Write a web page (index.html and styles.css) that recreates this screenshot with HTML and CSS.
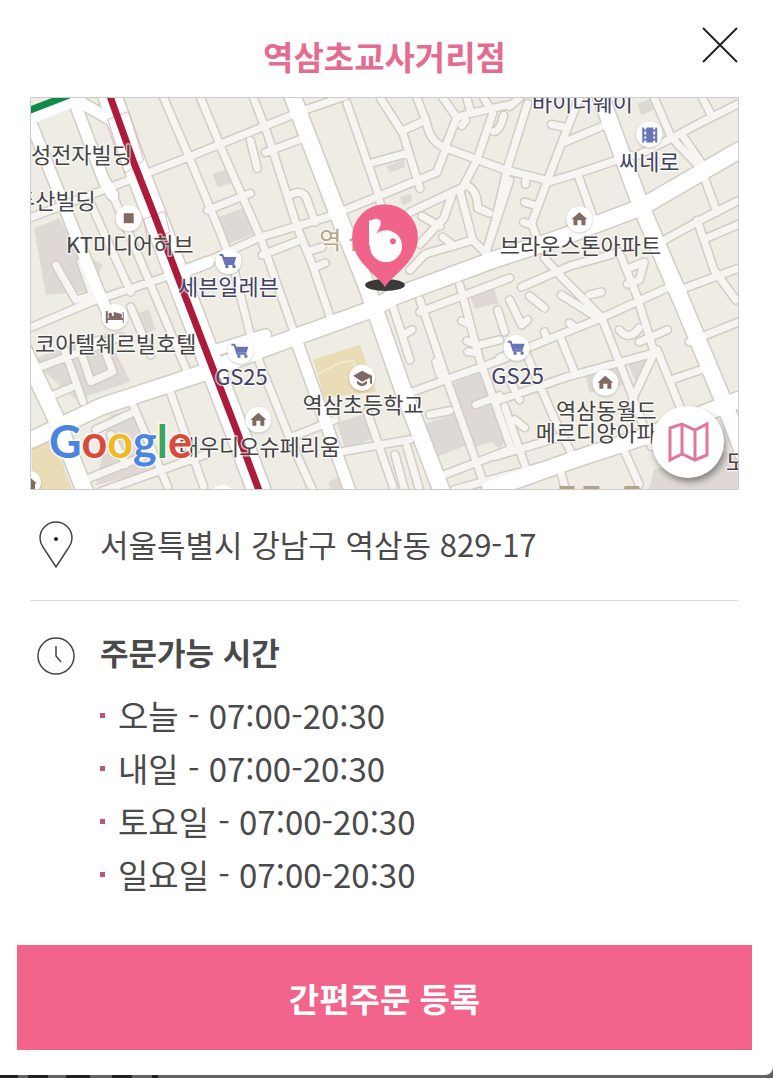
FILE: index.html
```html
<!DOCTYPE html>
<html lang="ko">
<head>
<meta charset="utf-8">
<meta name="viewport" content="width=device-width, initial-scale=1">
<title>역삼초교사거리점</title>
<link rel="stylesheet" href="styles.css">
</head>
<body>
<main class="sheet">
  <header class="sheet-header">
    <h1 class="store-name">역삼초교사거리점</h1>
    <button class="close" type="button" aria-label="닫기">
      <svg viewBox="0 0 38 38" width="38" height="38"><path d="M2 2 36 36M36 2 2 36"/></svg>
    </button>
  </header>

  <section class="map" aria-label="지도">
    <svg class="map-canvas" viewBox="30 97 709 393" preserveAspectRatio="xMidYMid slice">
      <defs>
        <path id="minor" d="M31 217 133 178 187 157 303 110 347 95M187 270 260 237 327 217 393 190 437 172 446 148M163 97 187 153 220 233 233 267 253 347 290 440 313 492M200 97 223 153 260 237 293 330M253 97 267 133 297 227 313 267 330 317M207 210 250 193M250 140 257 168M265 152 300 139M288 196Q303 187 307 200L315 222M262 255 300 240M312 250 322 247M315 267 325 263
          M87 197 130 292M110 190 153 292 190 380M130 307 150 355M31 327 90 302 180 272M40 367 120 337M60 340 82 402M82 345 100 340 112 372 90 382 78 347M48 397 70 388M133 407 167 487M170 393 203 487M95 430 130 414M85 480 140 458M100 492 205 455M110 435 125 465M55 265 75 300 92 295 80 262
          M347 103 377 190 383 215M380 97 403 133 420 188M403 130 423 121M417 97 427 123Q430 142 447 148L507 170 548 180M370 163 407 153M443 97 457 117 446 145M457 117 470 113 510 104M467 97 471 112M484 97 490 108M493 113 477 160 463 187 410 212M510 180 487 250 490 262M467 185Q478 190 478 208L490 213M460 190 473 240 487 254M473 240 425 254 410 270M452 195 444 218 420 244M422 216 440 226M443 237 454 246M462 125 466 120M494 131Q500 131 504 115
          M528 103 508 167 495 223 487 250M580 97 562 143 548 180 532 223 538 240M562 143 612 122M552 124 566 127M548 182 578 173 632 155M578 173 594 218M526 180 526 184M525 202 535 205M524 222 533 225M520 97 510 106M655 97 672 137 700 166M638 155 672 138 700 123 740 103M702 95 712 114M682 133 704 165
          M705 177 718 212M665 240 705 218 740 200M698 220 715 270 737 300M705 239 740 224M675 292 740 268M622 257 638 297 655 353M545 258 565 280 602 317 628 383 652 447M522 287 570 266 620 252M562 295 602 320M630 268 645 262 640 280 628 284
          M500 358 528 348 602 318 668 288 680 285M495 402 568 377 655 353M690 342 740 322M525 350 552 413 575 460M562 340 575 372M505 407 530 479M495 457 562 437M655 353 633 400M658 350 682 410M672 380 702 370M668 330 640 342M620 330Q630 342 640 328M570 323 575 327M545 332 548 340M590 295 602 292M510 300 522 325 528 320M530 296 545 308M515 420 525 428M560 468 566 490M620 440 640 485
          M420 300 447 380 482 478M460 285 480 360 512 450M410 393 507 358M420 312 510 278M393 307 402 335 410 360M403 335 412 330M436 362 440 375M440 477 510 450M430 415 450 411M476 405 500 396M498 310 505 332M462 321 470 324M467 341 476 344M468 352 478 353M500 340 480 345
          M293 437 335 420M367 412 393 487M337 453 410 440M407 447 420 492M395 455 405 492M510 380 520 400M455 490 560 462"/>
        <path id="local" d="M31 125 70 223 100 297 110 320M73 100 103 180 112 195M73 98 120 125M297 343 350 492M187 270 208 262M210 352 265 335"/>
        <path id="arterial" d="M292 95 335 207 367 287 403 390 442 492M31 440 100 407 197 375 260 350 370 310 393 297 493 260 560 238 642 207 740 150M600 92 642 207 682 300 725 403 745 455M490 490 575 460 645 437 740 400M20 345 57 423 84 492"/>
        <path id="boulevard" d="M109 95 133 162 153 213 183 292 237 433 259 492"/>
        <g id="cart"><path d="M-9-6H-6L-3 3H6" class="ink-line"/><path d="M-5-4H8L6 2H-3Z"/><path d="M-3 4H0V7H-3ZM4 4H7V7H4Z"/></g>
        <path id="home" d="M-8 0 0-7 8 0H6V6H2V1H-2V6H-6V0Z"/>
      </defs>
      <rect class="land" x="30" y="97" width="709" height="393"/>
      <path class="school-yard" d="M313 360 360 345 376 392 324 398ZM31 447 53 440 71 490H31Z"/>
      <path class="building" d="M212 174 226 169 231 183 217 187ZM214 218 245 207 253 234 222 246ZM33 228 58 218 102 290 45 295ZM85 255 102 265 98 274 88 270ZM386 166 404 159 405 167 390 172ZM400 197 411 193 412 201 403 205ZM638 103 652 98 655 109 642 115ZM337 423 368 413 375 438 345 450ZM453 384 480 373 506 438 474 448ZM422 425 458 413 466 446 438 457ZM628 363 654 356 640 390ZM30 360 105 333 130 382 75 400ZM130 317 148 309 155 329 138 336ZM110 415 135 408 155 470 95 486ZM470 295 494 287 499 303 475 309ZM497 415 510 435 500 449 488 440ZM655 470 740 450V490H650ZM328 482 342 477 347 490H330ZM585 372 620 365 625 385 590 393Z"/>
      <path class="plot" d="M318 374 340 363 353 361 360 378"/>
      <use class="road-edge minor-edge" href="#minor"/>
      <use class="road-edge local-edge" href="#local"/>
      <use class="road-edge arterial-edge" href="#arterial"/>
      <use class="road-edge boulevard-edge" href="#boulevard"/>
      <use class="road minor-fill" href="#minor"/>
      <use class="road local-fill" href="#local"/>
      <use class="road arterial-fill" href="#arterial"/>
      <use class="road boulevard-fill" href="#boulevard"/>
      <path class="green-band" d="M28 116 83 94"/>
      <path class="green-line" d="M28 110 72 93"/>
      <path class="crossing" d="M107 119 128 111 143 160 124 173ZM143 219 164 211 169 232 147 240Z"/>
      <use class="subway" href="#boulevard"/>

      <g class="poi-discs">
        <circle cx="128" cy="218" r="13"/><circle cx="228" cy="261" r="13"/><circle cx="114" cy="317" r="13"/>
        <circle cx="240" cy="351" r="13"/><circle cx="258" cy="420" r="13"/><circle cx="362" cy="378" r="13"/>
        <circle cx="517" cy="348" r="13"/><circle cx="606" cy="383" r="13"/><circle cx="580" cy="219" r="13"/>
        <circle cx="650" cy="134" r="13"/><circle cx="28" cy="483" r="12"/><circle cx="222" cy="497" r="12"/>
      </g>
      <g class="poi-shop">
        <use href="#cart" x="228" y="261"/><use href="#cart" x="240" y="351"/><use href="#cart" x="517" y="348"/>
        <path fill-rule="evenodd" d="M643 127H645V129H647V127H654V129H656V127H658V142H656V140H654V142H647V140H645V142H643ZM645 131V134H647V131ZM645 136V138H647V136ZM654 131V134H656V131ZM654 136V138H656V136Z"/>
      </g>
      <g class="poi-place">
        <path d="M123 213H133V223H123Z"/>
        <use href="#home" x="258" y="420"/><use href="#home" x="606" y="383"/><use href="#home" x="580" y="219"/><use href="#home" x="28" y="484"/>
        <path d="M105 311H107V318H121V314L113 312V316H111A2 2 0 1 0 108 316V318H122V312H123V323H122V320H107V323H105Z"/>
        <path d="M353 376 362 371 372 376V384H370V378L362 382ZM357 381 362 384 367 381V384Q362 389 357 384Z"/>
      </g>

      <g class="map-text">
        <text x="30" y="163">성전자빌딩</text>
        <text x="95" y="209" text-anchor="end">두산빌딩</text>
        <text x="65" y="253">KT미디어허브</text>
        <text x="34" y="352">코아텔쉐르빌호텔</text>
        <text x="340" y="455" text-anchor="end">대우디오슈페리움</text>
        <text x="363" y="413" text-anchor="middle">역삼초등학교</text>
        <text x="607" y="419" text-anchor="middle">역삼동월드</text>
        <text x="607" y="441" text-anchor="middle">메르디앙아파트</text>
        <text x="581" y="254" text-anchor="middle">브라운스톤아파트</text>
        <text x="727" y="471">모</text>
        <g class="shop-text">
          <text x="228" y="295" text-anchor="middle">세븐일레븐</text>
          <text x="241" y="385" text-anchor="middle">GS25</text>
          <text x="518" y="384" text-anchor="middle">GS25</text>
          <text x="650" y="170" text-anchor="middle">씨네로</text>
          <text x="583" y="110" text-anchor="middle">바이더웨이</text>
        </g>
        <text class="district" x="319" y="249">역 삼</text>
      </g>
      <path class="district-edge" d="M560 488H575M584 488H600M625 488H640"/>

      <ellipse class="pin-shadow" cx="385" cy="285" rx="20" ry="6"/>
      <path class="pin" d="M385 287C379 276 352 262 352 237A33 33 0 0 1 418 237C418 262 391 276 385 287Z"/>
      <path class="rabbit" d="M369 245V222Q369 219 372 220Q376 217 380 220Q383 223 376 234L372 248Z"/>
      <circle class="rabbit" cx="386" cy="246" r="16"/>
      <circle class="pin" cx="393" cy="241" r="3"/>
      <text class="google" x="48" y="458"><tspan class="g-blue">G</tspan><tspan class="g-red">o</tspan><tspan class="g-yellow">o</tspan><tspan class="g-blue">g</tspan><tspan class="g-green">l</tspan><tspan class="g-red">e</tspan></text>
    </svg>
    <button class="open-map" type="button" aria-label="지도 열기">
      <svg viewBox="0 0 42 42" width="42" height="42"><path d="M3 7 15 3 28 9 40 3V34L28 39 15 33 3 39ZM15 3V33M28 9V39"/></svg>
    </button>
  </section>

  <section class="row address">
    <svg class="row-icon" viewBox="0 0 40 48" width="40" height="48"><path d="M20 47 7 27C4 23 4 20 4 18A16 16 0 0 1 36 18C36 20 36 23 33 27Z"/><circle class="dot" cx="20" cy="19" r="2"/></svg>
    <p class="address-text">서울특별시 강남구 역삼동 829-17</p>
  </section>

  <section class="row hours">
    <svg class="row-icon" viewBox="0 0 40 48" width="40" height="48"><circle cx="20" cy="28" r="18"/><path d="M20 18V28L25 34"/></svg>
    <div>
      <h2 class="hours-title">주문가능 시간</h2>
      <ul class="hours-list">
        <li>오늘 - 07:00-20:30</li>
        <li>내일 - 07:00-20:30</li>
        <li>토요일 - 07:00-20:30</li>
        <li>일요일 - 07:00-20:30</li>
      </ul>
    </div>
  </section>

  <button class="register" type="button">간편주문 등록</button>
</main>
<div class="backdrop"></div>
</body>
</html>
```
FILE: styles.css
```css
* { box-sizing: border-box; }

body {
  margin: 0;
  min-height: 100vh;
  display: flex;
  flex-direction: column;
  background: #616361;
  color: #4a4a4a;
  font-family: "Noto Sans CJK KR", sans-serif;
}

h1, h2, p, ul { margin: 0; padding: 0; }
button { border: 0; padding: 0; font-family: inherit; cursor: pointer; }
svg { display: block; }

.sheet {
  flex: 1;
  display: flex;
  flex-direction: column;
  padding-bottom: 25px;
  background: #fff;
  border-bottom-right-radius: 8px;
}

.backdrop {
  height: 3px;
  background: linear-gradient(90deg, #222 0 18px, transparent 18px 28px, #222 28px 48px, transparent 48px 66px, #222 66px 90px, transparent 90px 112px, #222 112px 132px, transparent 132px 152px, #222 152px 158px, transparent 158px);
}

.sheet-header {
  display: grid;
  grid-template-columns: 1fr auto 1fr;
  align-items: start;
  height: 97px;
  padding: 26px 34px 0 30px;
}

.store-name {
  grid-column: 2;
  color: #e56c91;
  font-size: 33px;
  font-weight: 700;
  line-height: 60px;
}

.close { justify-self: end; background: none; }
.close path { fill: none; stroke: #222; stroke-width: 2; }

.map {
  position: relative;
  margin: 0 34px 0 30px;
  aspect-ratio: 709 / 393;
  border: 1px solid #ccc;
  overflow: hidden;
}

.map-canvas { width: 100%; height: 100%; }

.open-map {
  position: absolute;
  right: 14px;
  bottom: 11px;
  display: grid;
  place-items: center;
  width: 72px;
  height: 72px;
  border-radius: 50%;
  background: #fff;
  box-shadow: 2px 4px 6px #0006;
}
.open-map path { fill: none; stroke: #e2779a; stroke-width: 3; stroke-linejoin: miter; }

.land { fill: #eeece3; }
.building { fill: #ded9d4; }
.school-yard { fill: #e9dcb6; }
.plot { fill: none; stroke: #f1e9d0; stroke-width: 2; }
.road, .road-edge { fill: none; stroke-linejoin: round; stroke-linecap: round; }
.road-edge { stroke: #d1cdc5; }
.minor-edge { stroke-width: 10; }
.local-edge { stroke-width: 14; }
.arterial-edge { stroke-width: 19; }
.boulevard-edge { stroke-width: 26; }
.minor-fill { stroke: #f7f5f2; stroke-width: 7; }
.local-fill { stroke: #fff; stroke-width: 11; }
.arterial-fill { stroke: #fff; stroke-width: 16; }
.boulevard-fill { stroke: #fff; stroke-width: 23; }
.green-band { stroke: #fff; stroke-width: 16; }
.green-line { stroke: #108a48; stroke-width: 7; }
.crossing { fill: none; stroke: #e6b5bb; stroke-width: 1; }
.subway { fill: none; stroke: #ac1c3a; stroke-width: 7; }

.poi-discs { fill: #fff; filter: drop-shadow(0 1px 1px #0003); }
.poi-shop { fill: #6874b8; }
.ink-line { fill: none; stroke: #6874b8; stroke-width: 2; }
.poi-place { fill: #806b61; }

.map-text {
  fill: #444;
  font-size: 22px;
  stroke: #fff9;
  stroke-width: 3px;
  stroke-linejoin: round;
  paint-order: stroke;
}
.shop-text { fill: #3f4164; }
.district { fill: #b4a385; font-size: 24px; }
.district-edge { stroke: #b4a385; stroke-width: 3; }

.pin { fill: #f0648a; }
.pin-shadow { fill: #3c3a39; }
.rabbit { fill: #fff; }

.google {
  font-family: Lato, sans-serif;
  font-size: 45px;
  font-weight: 700;
  stroke: #fffc;
  stroke-width: 3px;
  paint-order: stroke;
}
.g-blue { fill: #4a86e0; }
.g-red { fill: #da4a3c; }
.g-yellow { fill: #efb924; }
.g-green { fill: #3fa45b; }

.row {
  display: grid;
  grid-template-columns: 40px 1fr;
  column-gap: 24px;
  margin: 0 34px 0 30px;
  padding-left: 6px;
}
.row-icon { fill: none; stroke: #444; stroke-width: 1.5; }
.dot { fill: #222; stroke: none; }

.address {
  align-items: center;
  padding-top: 26px;
  padding-bottom: 28px;
  border-bottom: 1px solid #ddd;
}
.address-text { font-size: 31px; line-height: 56px; }

.hours { padding-top: 27px; }
.hours-title { font-size: 31px; font-weight: 700; line-height: 48px; }
.hours-list { padding-top: 13px; list-style: none; }
.hours-list li {
  display: flex;
  align-items: center;
  gap: 13px;
  font-size: 33px;
  line-height: 53px;
}
.hours-list li::before { content: ""; width: 5px; height: 5px; background: #b5567a; }

.register {
  margin: auto 21px 0 17px;
  height: 105px;
  background: #f2648a;
  color: #fff;
  font-size: 33px;
  font-weight: 700;
}
```
